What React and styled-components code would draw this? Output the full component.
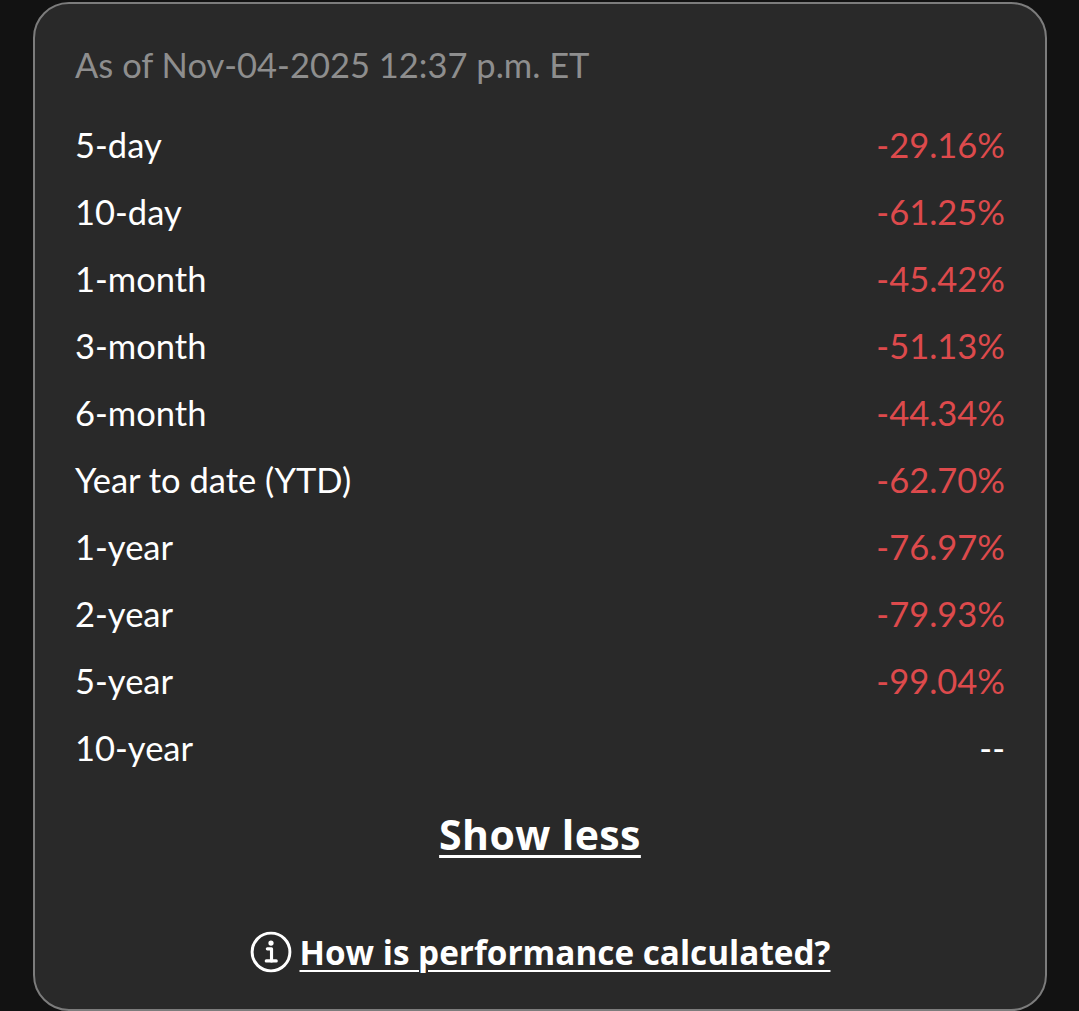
import React from 'react';
import styled, { createGlobalStyle } from 'styled-components';

const rows = [
  { label: '5-day', value: '-29.16%' },
  { label: '10-day', value: '-61.25%' },
  { label: '1-month', value: '-45.42%' },
  { label: '3-month', value: '-51.13%' },
  { label: '6-month', value: '-44.34%' },
  { label: 'Year to date (YTD)', value: '-62.70%' },
  { label: '1-year', value: '-76.97%' },
  { label: '2-year', value: '-79.93%' },
  { label: '5-year', value: '-99.04%' },
  { label: '10-year', value: '--' },
];

const GlobalStyle = createGlobalStyle`
  html, body {
    margin: 0;
    padding: 0;
    background: #121212;
    font-family: Lato, "Noto Sans", sans-serif;
  }
`;

const Page = styled.div`
  padding: 2px 32px 0 33px;
  height: 1011px;
  box-sizing: border-box;
  overflow: hidden;
`;

const Card = styled.section`
  height: 1009px;
  box-sizing: border-box;
  background: #292929;
  border: 2px solid #7c7c7c;
  border-radius: 36px;
  padding: 0 40px;
  display: flex;
  flex-direction: column;
`;

const AsOf = styled.p`
  margin: 41px 0 0;
  font-size: 34.5px;
  line-height: 40px;
  color: #8e8e8e;
`;

const List = styled.div`
  margin-top: 26px;
  display: flex;
  flex-direction: column;
`;

const Row = styled.div`
  display: flex;
  justify-content: space-between;
  align-items: center;
  height: 67px;
  font-size: 34.5px;
`;

const Label = styled.span`
  color: #ffffff;
`;

const Value = styled.span`
  color: ${(p) => (p.$neutral ? '#ffffff' : '#dd4a4c')};
`;

const ShowLess = styled.button`
  align-self: center;
  margin-top: 29px;
  background: none;
  border: 0;
  padding: 0;
  font-family: "Open Sans", Lato, sans-serif;
  font-weight: 700;
  font-size: 41px;
  letter-spacing: 0.4px;
  line-height: 48px;
  color: #ffffff;
  text-decoration: underline;
  text-decoration-thickness: 3px;
  text-underline-offset: 5px;
  cursor: pointer;
`;

const InfoLink = styled.a`
  align-self: center;
  margin-top: 72px;
  display: flex;
  align-items: center;
  gap: 8px;
  color: #ffffff;
  font-family: "Open Sans", Lato, sans-serif;
  font-weight: 700;
  font-size: 33.3px;
  line-height: 44px;
  cursor: pointer;
`;

const LinkText = styled.span`
  text-decoration: underline;
  text-decoration-thickness: 2px;
  text-underline-offset: 5px;
`;

const InfoIcon = () => (
  <svg width="42" height="42" viewBox="0 0 40 40" fill="none" stroke="#fff">
    <circle cx="20" cy="20" r="18" strokeWidth="2.8" />
    <circle cx="20" cy="11.5" r="2.5" fill="#fff" stroke="none" />
    <path d="M16.5 17 H20.5 V28.5" strokeWidth="3" strokeLinecap="round" strokeLinejoin="round" />
    <path d="M15.5 28.5 H25" strokeWidth="3" strokeLinecap="round" />
  </svg>
);

export default function App() {
  return (
    <>
      <GlobalStyle />
      <Page>
        <Card>
          <AsOf>As of Nov-04-2025 12:37 p.m. ET</AsOf>
          <List>
            {rows.map(({ label, value }) => (
              <Row key={label}>
                <Label>{label}</Label>
                <Value $neutral={value === '--'}>{value}</Value>
              </Row>
            ))}
          </List>
          <ShowLess>Show less</ShowLess>
          <InfoLink>
            <InfoIcon />
            <LinkText>How is performance calculated?</LinkText>
          </InfoLink>
        </Card>
      </Page>
    </>
  );
}
